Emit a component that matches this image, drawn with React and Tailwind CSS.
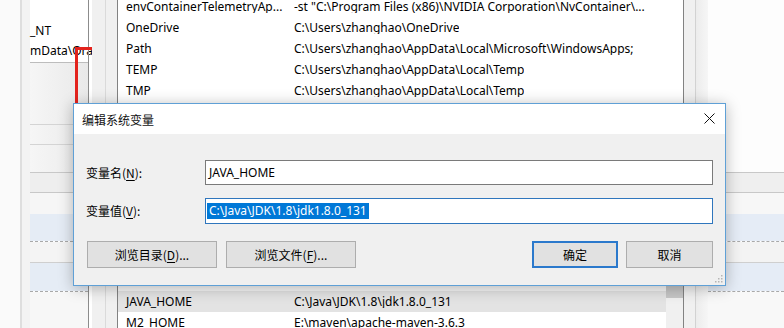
import React from "react";

const FONT = "font-['Noto_Sans','Noto_Sans_CJK_SC',sans-serif]";

function Row({ name, value, className = "" }) {
  return (
    <div className={`flex h-[21px] shrink-0 items-center whitespace-nowrap ${className}`}>
      <div className="w-[176px] shrink-0 overflow-hidden pl-[8px]">{name}</div>
      <div className="overflow-hidden">{value}</div>
    </div>
  );
}

function Btn({ children, className = "", primary = false }) {
  return (
    <div
      className={`flex h-[27px] items-center justify-center bg-[#e1e1e1] ${
        primary ? "border-2 border-[#2b79cc]" : "border border-[#adadad]"
      } ${className}`}
    >
      {children}
    </div>
  );
}

export default function App() {
  return (
    <div className={`relative h-[328px] w-[784px] overflow-hidden bg-white text-[12px] leading-none text-black ${FONT}`}>
      {/* back window */}
      <div className="absolute inset-0 flex">
        <div className="w-[20px] shrink-0 bg-[#fafafa]" />
        <div className="w-[2px] shrink-0 bg-[#dedede]" />
        <div className="w-[8px] shrink-0 bg-[#f3f3f3]" />
        {/* left list pane */}
        <div className="flex w-[58px] shrink-0 flex-col">
          <div className="flex h-[62px] shrink-0 flex-col justify-end bg-white pb-[1px] whitespace-nowrap">
            <div className="flex h-[21px] items-center">_NT</div>
            <div className="flex h-[20px] items-center">mData\Ora</div>
          </div>
          <div className="h-[1px] shrink-0 bg-[#bdbdbd]" />
          <div className="h-[61px] shrink-0 bg-gradient-to-r from-[#f6f6f6] to-[#e9e9e9]" />
          <div className="h-[1px] shrink-0 bg-[#d4d4d4]" />
          <div className="h-[19px] shrink-0 bg-gradient-to-r from-[#f6f6f6] to-[#e9e9e9]" />
          <div className="h-[1px] shrink-0 bg-[#d4d4d4]" />
          <div className="h-[27px] shrink-0 bg-gradient-to-r from-[#f6f6f6] to-[#eaeaea]" />
          <div className="h-[1px] shrink-0 bg-[#c8c8c8]" />
          <div className="h-[19px] shrink-0 bg-[#eeeeee]" />
          <div className="h-[1px] shrink-0 bg-[#c8c8c8]" />
          <div className="h-[21px] shrink-0 bg-[#f6f6f6]" />
          <div className="h-[27px] shrink-0 bg-[#e5ecf5]" />
          <div className="h-0 shrink-0 border-t border-dashed border-[#a9a9a9]" />
          <div className="h-[20px] shrink-0 bg-[#f4f4f4]" />
          <div className="h-[1px] shrink-0 bg-[#cfcfcf]" />
          <div className="h-[28px] shrink-0 bg-[#e5ecf5]" />
          <div className="h-0 shrink-0 border-t border-dashed border-[#a9a9a9]" />
          <div className="flex-1 bg-[#f7f7f7]" />
        </div>
        <div className="w-[1px] shrink-0 bg-[#8c8c8c]" />
        <div className="flex-1" />
        {/* right pane */}
        <div className="flex w-[76px] shrink-0 flex-col">
          <div className="h-[172px] shrink-0 bg-[#fdfdfd]" />
          <div className="h-[1px] shrink-0 bg-[#c8c8c8]" />
          <div className="h-[19px] shrink-0 bg-[#efefef]" />
          <div className="h-[1px] shrink-0 bg-[#c8c8c8]" />
          <div className="h-[21px] shrink-0 bg-[#f7f7f7]" />
          <div className="h-[27px] shrink-0 bg-[#e5ecf6]" />
          <div className="h-0 shrink-0 border-t border-dashed border-[#a9a9a9]" />
          <div className="h-[20px] shrink-0 bg-[#f3f3f3]" />
          <div className="h-[1px] shrink-0 bg-[#cfcfcf]" />
          <div className="h-[28px] shrink-0 bg-[#e5ecf6]" />
          <div className="h-0 shrink-0 border-t border-dashed border-[#a9a9a9]" />
          <div className="flex-1 bg-[#f8f8f8]" />
        </div>
      </div>

      {/* red annotation */}
      <div className="absolute left-[75px] top-[47px] h-[3px] w-[20px] bg-[#e3231d]" />
      <div className="absolute left-[75px] top-[47px] h-[60px] w-[3px] bg-[#e3231d]" />

      {/* middle window */}
      <div className="absolute left-[92px] top-0 flex h-[328px] w-[616px] bg-[#f0f0f0]">
        <div className="flex w-[25px] shrink-0">
          <div className="w-[13px]" />
          <div className="w-[1px] bg-[#dadada]" />
        </div>
        <div className="flex w-[567px] shrink-0 flex-col">
          <div className="h-[110px] shrink-0 overflow-hidden border-x border-[#828282] bg-white">
            <div className="-mt-[4px]">
              <Row name="envContainerTelemetryAp..." value={'-st "C:\\Program Files (x86)\\NVIDIA Corporation\\NvContainer\\...'} />
              <Row name="OneDrive" value="C:\Users\zhanghao\OneDrive" />
              <Row name="Path" value="C:\Users\zhanghao\AppData\Local\Microsoft\WindowsApps;" />
              <Row name="TEMP" value="C:\Users\zhanghao\AppData\Local\Temp" />
              <Row name="TMP" value="C:\Users\zhanghao\AppData\Local\Temp" />
            </div>
          </div>
          <div className="h-[173px] shrink-0" />
          <div className="flex min-h-0 flex-1 overflow-hidden border-x border-[#828282] bg-white">
            <div className="flex flex-1 flex-col">
              <div className="h-[8px] shrink-0 bg-[#f7f7f7]" />
              <Row name="JAVA_HOME" value="C:\Java\JDK\1.8\jdk1.8.0_131" className="bg-[#e3e3e3]" />
              <Row name="M2_HOME" value="E:\maven\apache-maven-3.6.3" />
            </div>
            <div className="flex w-[17px] flex-col bg-[#f0f0f0]">
              <div className="mt-[2px] h-[13px] shrink-0 bg-[#c6c6c6]" />
            </div>
          </div>
        </div>
        <div className="flex flex-1">
          <div className="w-[11px]" />
          <div className="w-[1px] bg-[#d2d2d2]" />
          <div className="flex-1 bg-gradient-to-r from-[#ececec] to-[#f6f6f6]" />
        </div>
      </div>

      {/* dialog */}
      <div className="absolute left-[73px] top-[103px] flex h-[183px] w-[653px] flex-col border border-[#5fa0d6] bg-[#f0f0f0] shadow-[0_2px_14px_rgba(0,0,0,0.28)]">
        <div className="flex h-[30px] shrink-0 items-center justify-between bg-white pl-[8px] pr-[10px]">
          <span className="pt-[1px] font-['Noto_Sans_CJK_SC',sans-serif] text-[#111]">编辑系统变量</span>
          <svg width="11" height="11" viewBox="0 0 11 11" className="mt-[-1px]">
            <path d="M0.5 0.5 L10.5 10.5 M10.5 0.5 L0.5 10.5" stroke="#111" strokeWidth="1" />
          </svg>
        </div>
        <div className="relative flex flex-1 flex-col px-[12px] pt-[26px]">
          <div className="flex h-[25px] items-center">
            <div className="w-[119px] shrink-0 font-['Noto_Sans_CJK_SC',sans-serif]">
              变量名(<span className="underline underline-offset-2">N</span>):
            </div>
            <div className="flex h-[25px] flex-1 items-center border border-[#7a7a7a] bg-white pl-[3px]">
              JAVA_HOME
            </div>
          </div>
          <div className="mt-[13px] flex h-[26px] items-center">
            <div className="w-[119px] shrink-0 font-['Noto_Sans_CJK_SC',sans-serif]">
              变量值(<span className="underline underline-offset-2">V</span>):
            </div>
            <div className="flex h-[26px] flex-1 items-center border border-[#2f76bd] bg-white pl-[1px]">
              <span className="flex h-[16px] items-center bg-[#0078d7] px-[2px] text-white">
                C:\Java\JDK\1.8\jdk1.8.0_131
              </span>
            </div>
          </div>
          <div className="mt-[17px] flex items-center pl-[1px] font-['Noto_Sans_CJK_SC',sans-serif]">
            <Btn className="w-[130px]">
              浏览目录(<span className="underline underline-offset-2">D</span>)...
            </Btn>
            <Btn className="ml-[9px] w-[130px]">
              浏览文件(<span className="underline underline-offset-2">F</span>)...
            </Btn>
            <div className="flex-1" />
            <Btn primary className="w-[86px]">确定</Btn>
            <Btn className="ml-[8px] w-[87px]">取消</Btn>
          </div>
          <svg width="8" height="8" viewBox="0 0 8 8" className="absolute bottom-[2px] right-[2px]">
            <rect x="6" y="0" width="1.5" height="1.5" fill="#b5b5b5" />
            <rect x="3" y="3" width="1.5" height="1.5" fill="#b5b5b5" />
            <rect x="6" y="3" width="1.5" height="1.5" fill="#b5b5b5" />
            <rect x="0" y="6" width="1.5" height="1.5" fill="#b5b5b5" />
            <rect x="3" y="6" width="1.5" height="1.5" fill="#b5b5b5" />
            <rect x="6" y="6" width="1.5" height="1.5" fill="#b5b5b5" />
          </svg>
        </div>
      </div>
    </div>
  );
}
